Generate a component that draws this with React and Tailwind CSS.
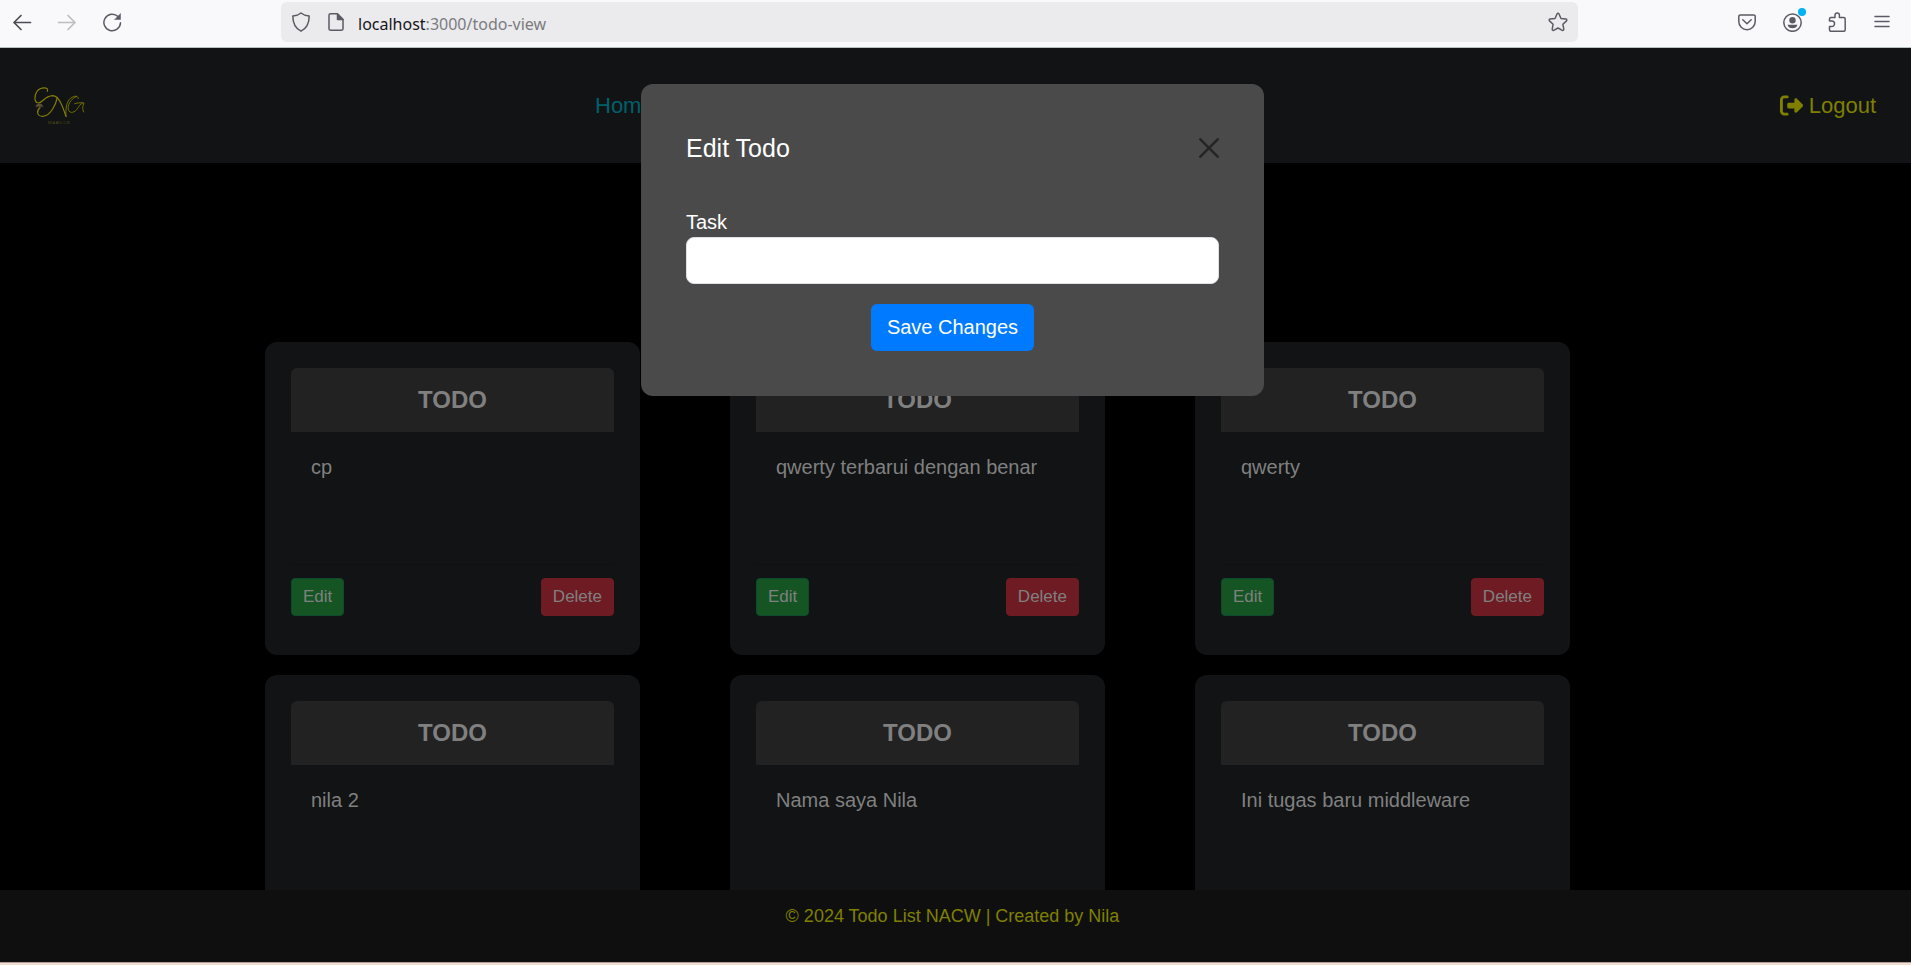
import { FaRightFromBracket } from "react-icons/fa6";

const todos = [
  "cp",
  "qwerty terbarui dengan benar",
  "qwerty",
  "nila 2",
  "Nama saya Nila",
  "Ini tugas baru middleware",
];

function Icon({ children, className = "" }) {
  return (
    <svg
      viewBox="0 0 20 20"
      className={`size-5 shrink-0 ${className}`}
      fill="none"
      stroke="currentColor"
      strokeWidth="1.5"
      strokeLinecap="round"
      strokeLinejoin="round"
      aria-hidden="true"
    >
      {children}
    </svg>
  );
}

function BrowserBar() {
  return (
    <header className="flex h-12 shrink-0 items-start border-b border-[#b9c1bd] bg-[#f9f9fb] pt-0.5 text-[#5b5b66]">
      <div className="flex h-10 w-[281px] shrink-0 items-center gap-[25px] pl-3">
        <button type="button" aria-label="Back" className="text-[#4c4c55]">
          <Icon>
            <path d="M18.500 10.500H2M9 3.500l-7 7 7 7" strokeWidth="1.700" />
          </Icon>
        </button>
        <button type="button" aria-label="Forward" className="text-[#bdbdc3]">
          <Icon>
            <path d="M1.500 10.500H18M11 3.500l7 7-7 7" strokeWidth="1.700" />
          </Icon>
        </button>
        <button type="button" aria-label="Reload">
          <Icon>
            <path d="M16 4.500A8.300 8.300 0 1 0 18.500 10.800" />
            <path d="M18.500 1.800v5.700h-5.700z" fill="currentColor" strokeWidth="0.500" />
          </Icon>
        </button>
      </div>
      <div className="flex h-10 min-w-0 max-w-[1297px] flex-1 items-center rounded-md bg-[#ebebed] px-2.5">
        <Icon>
          <path d="M10 1c2 1.700 5 2.700 8.200 3C18.200 10.500 15.500 16.500 10 19.200 4.500 16.500 1.800 10.500 1.800 4 5 3.700 8 2.700 10 1z" />
        </Icon>
        <Icon className="ml-[15px]">
          <path d="M11 1.800H4.500A1.500 1.500 0 0 0 3 3.300v13.400a1.500 1.500 0 0 0 1.500 1.500h11a1.500 1.500 0 0 0 1.500-1.500V7.500z" />
          <path d="M11.500 1.800v5.700H17z" fill="currentColor" />
        </Icon>
        <input
          aria-label="Address"
          readOnly
          value="localhost:3000/todo-view"
          className="sr-only"
        />
        <span className="ml-3 flex-1 pt-1 font-['Noto_Sans',sans-serif] text-base text-[#15141a]">
          localhost<span className="text-[#7b7b80]">:3000/todo-view</span>
        </span>
        <button type="button" aria-label="Bookmark this page">
          <Icon>
            <path d="M10 1.300c.5 0 .8.300 1 .7l2 4.500 4.900.6c.9.100 1.200 1.200.600 1.800l-3.600 3.400.9 4.900c.2.900-.700 1.500-1.500 1.100L10 16l-4.300 2.300c-.8.400-1.700-.2-1.500-1.100l.9-4.900L1.500 8.900c-.6-.6-.3-1.700.6-1.800L7 6.500 9 2c.2-.4.5-.7 1-.7z" />
          </Icon>
        </button>
      </div>
      <div className="ml-auto flex h-10 shrink-0 items-center gap-[25px] pr-[19px]">
        <button type="button" aria-label="Pocket">
          <Icon>
            <path d="M3.500 3h13A1.500 1.500 0 0 1 18.200 4.500V9.500a8.200 8.200 0 0 1-16.400 0V4.500A1.500 1.500 0 0 1 3.500 3z" />
            <path d="m5.800 7.700 4.200 4 4.200-4" />
          </Icon>
        </button>
        <button type="button" aria-label="Account" className="relative">
          <Icon>
            <circle cx="10.500" cy="10.600" r="8.700" />
            <circle cx="10.500" cy="8.200" r="3.200" fill="currentColor" stroke="none" />
            <path d="M5.500 12.800h10c-.5 2.500-2.500 3.500-5 3.500s-4.500-1-5-3.500z" fill="currentColor" stroke="none" />
          </Icon>
          <span className="absolute -top-1 -right-1 size-2 rounded-full bg-[#00b3f4]" />
        </button>
        <button type="button" aria-label="Extensions">
          <Icon>
            <path d="M2.500 9V7A1.500 1.500 0 0 1 4 5.500H8V3.200a2.200 2.200 0 0 1 4.400 0v2.300h4.300A1.500 1.500 0 0 1 18.200 7v10.800a1.500 1.500 0 0 1-1.500 1.500H4a1.500 1.500 0 0 1-1.500-1.500V14.500h2.300a2.700 2.700 0 0 0 0-5.500z" />
          </Icon>
        </button>
        <button type="button" aria-label="Menu">
          <Icon>
            <path d="M3 4.500h14M3 9.500h14M3 14.500h14" />
          </Icon>
        </button>
      </div>
    </header>
  );
}

function Logo() {
  return (
    <svg viewBox="33 46 162 120" className="h-10 w-[54px] shrink-0" fill="none" stroke="#858000" strokeWidth="3.500" strokeLinecap="round" role="img" aria-label="CNG">
      <path d="M82 62C88 48 62 48 51 62C40 78 44 97 56 97C68 96 74 76 98 75C118 76 128 108 138 137" />
      <path d="M112 80C108 100 92 136 68 137C50 137 49 119 60 111" />
      <path d="M138 137C137 118 138 98 148 86C156 78 174 70 175 84" strokeWidth="2.500" />
      <path d="M170 77C152 84 142 104 145 117C149 131 166 125 173 113C177 106 182 100 187 97" strokeWidth="2.500" />
      <path d="M164 99C172 96 184 96 192 97C188 106 186 114 191 124" strokeWidth="2.500" />
      <path d="M48 107c0-10 20-10 20 0zM58 107v5" fill="#5d5034" stroke="#5d5034" strokeWidth="2" />
      <text x="116" y="161" textAnchor="middle" fontSize="10" fill="#55521a" stroke="none">NILA AYU C.W</text>
    </svg>
  );
}

function TodoCard({ task }) {
  return (
    <li className="flex h-[313px] flex-col rounded-xl bg-[#111314] px-[26px] pt-[26px] text-[#808080]">
      <h2 className="flex h-16 shrink-0 items-center justify-center rounded-t-md bg-[#222222] text-[24px] font-bold">TODO</h2>
      <p className="flex-1 px-5 pt-5 text-[20px] leading-[30px]">{task}</p>
      <div className="flex h-[91px] shrink-0 items-start justify-between border-t border-[#0e1011] pt-[13px]">
        <button type="button" className="h-[38px] rounded border border-[#0e4a2d] bg-[#145523] px-[11px] text-[17px]">Edit</button>
        <button type="button" className="h-[38px] rounded border border-[#6e1b23] bg-[#6e1b23] px-[11px] text-[17px]">Delete</button>
      </div>
    </li>
  );
}

function EditDialog() {
  return (
    <div className="absolute inset-x-0 top-9 flex justify-center pr-1.5">
      <section role="dialog" aria-labelledby="edit-title" className="w-full max-w-[623px] rounded-xl bg-[#4a4a4a] p-[45px] text-white">
        <div className="flex items-center justify-between">
          <h1 id="edit-title" className="text-[25px] leading-[38px]">Edit Todo</h1>
          <button type="button" aria-label="Close" className="text-[#252525]">
            <svg viewBox="0 0 20 20" className="size-5" fill="none" stroke="currentColor" strokeWidth="2.500" strokeLinecap="round" aria-hidden="true">
              <path d="m1.300 1.300 17.400 17.400M18.700 1.300 1.300 18.700" />
            </svg>
          </button>
        </div>
        <form className="flex flex-col pt-10">
          <label htmlFor="task" className="text-[20px] leading-[30px]">Task</label>
          <input id="task" className="h-[47px] rounded-lg border border-[#dee2e6] bg-white px-4 text-[20px] text-black outline-none" />
          <button type="button" className="mt-5 h-[47px] self-center rounded-md bg-[#007bff] px-4 pb-0.5 text-[20px]">Save Changes</button>
        </form>
      </section>
    </div>
  );
}

export default function App() {
  return (
    <div className="flex h-screen flex-col overflow-hidden bg-black font-['Liberation_Sans',Arial,sans-serif]">
      <BrowserBar />
      <div className="relative flex min-h-0 flex-1 flex-col">
        <nav className="flex h-[115px] shrink-0 items-center justify-between bg-[#111314] pr-[35px] pl-[31px] text-[22px]">
          <Logo />
          <a href="#home" className="mr-auto ml-[510px] text-[#00606d]">Home</a>
          <a href="#logout" className="flex items-center gap-1.5 text-[#808000]">
            <FaRightFromBracket className="size-[23px]" aria-hidden="true" />
            Logout
          </a>
        </nav>
        <main className="min-h-0 flex-1 overflow-y-auto pt-[179px] pl-[265px] [scrollbar-width:none]">
          <ul className="grid grid-cols-[repeat(3,375px)] gap-x-[90px] gap-y-5">
            {todos.map((task) => (
              <TodoCard key={task} task={task} />
            ))}
          </ul>
        </main>
        <footer className="h-[72px] shrink-0 bg-[#0f0f0f] pt-[11px] pr-1.5 text-center text-[18px] leading-[30px] text-[#808000]">
          © 2024 Todo List NACW | Created by Nila
        </footer>
        <EditDialog />
      </div>
      <div className="h-[3px] shrink-0 border-t border-[#a9a19c] bg-[#f3dccf]" />
    </div>
  );
}
